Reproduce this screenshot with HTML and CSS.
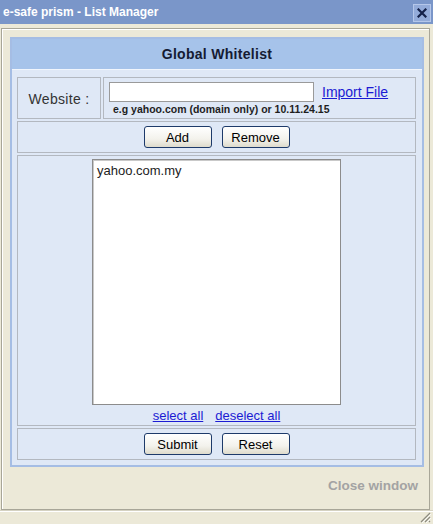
FILE: index.html
```html
<!DOCTYPE html>
<html>
<head>
<meta charset="utf-8">
<title>e-safe prism - List Manager</title>
<link rel="stylesheet" href="styles.css">
</head>
<body>
<div class="titlebar">
  <span class="title">e-safe prism - List Manager</span>
  <span class="close-btn">
    <svg width="10" height="10" viewBox="0 0 10 10"><path d="M1.5 1.5 L8.5 8.5 M8.5 1.5 L1.5 8.5" stroke="#15224a" stroke-width="2.2" stroke-linecap="square"/></svg>
  </span>
</div>
<div class="frame">
  <div class="panel">
    <div class="panel-head">Global Whitelist</div>
    <div class="panel-body">
      <div class="row row-split">
        <div class="cell label-cell">Website :</div>
        <div class="cell input-cell">
          <div class="input-line">
            <input class="site-input" type="text">
            <a class="link import-link" href="#">Import File</a>
          </div>
          <div class="hint">e.g yahoo.com (domain only) or 10.11.24.15</div>
        </div>
      </div>
      <div class="row cell btn-row">
        <button class="btn">Add</button>
        <button class="btn">Remove</button>
      </div>
      <div class="row cell list-row">
        <div class="listbox"><div class="list-item">yahoo.com.my</div></div>
        <div class="list-links">
          <a class="link" href="#">select all</a>
          <a class="link" href="#">deselect all</a>
        </div>
      </div>
      <div class="row cell btn-row">
        <button class="btn">Submit</button>
        <button class="btn">Reset</button>
      </div>
    </div>
  </div>
  <div class="close-window">Close window</div>
</div>
<div class="statusbar">
  <svg class="grip" width="12" height="12" viewBox="0 0 12 12">
    <path d="M11 2 L2 11 M11 6 L6 11 M11 10 L10 11" stroke="#8d8b80" stroke-width="1.2"/>
    <path d="M12 3 L3 12 M12 7 L7 12" stroke="#ffffff" stroke-width="0.8"/>
  </svg>
</div>
</body>
</html>
```

FILE: styles.css
```css
* { box-sizing: border-box; }
html, body {
  margin: 0;
  padding: 0;
  background: #ece9d8;
  font-family: "Liberation Sans", Arial, sans-serif;
  width: 433px;
  height: 524px;
  overflow: hidden;
}
.titlebar {
  height: 24px;
  background: #7a96c9;
  display: flex;
  align-items: center;
  justify-content: space-between;
  padding: 0 2px 0 3px;
}
.title {
  color: #ffffff;
  font-weight: bold;
  font-size: 12px;
}
.close-btn {
  width: 18px;
  height: 18px;
  background: #93abd9;
  border: 1px solid #b5c7ea;
  display: flex;
  align-items: center;
  justify-content: center;
  margin-top: 2px;
}
.frame {
  margin: 4px 3px 0 1px;
  height: 482px;
  border: 1px solid #a8a698;
  box-shadow: inset 1px 1px 0 #ffffff;
  padding: 8px 5px 0 8px;
}
.panel {
  width: 414px;
  border: 2px solid #a5bde4;
  background: #dfe8f6;
}
.panel-head {
  height: 31px;
  background: #a6c3ea;
  border-bottom: 1px solid #f1f5fc;
  display: flex;
  align-items: center;
  justify-content: center;
  font-weight: bold;
  font-size: 14px;
  letter-spacing: 0.3px;
  color: #151b33;
  padding-bottom: 1px;
}
.panel-body {
  padding: 7px 6px 5px 5px;
  display: flex;
  flex-direction: column;
  gap: 2px;
}
.cell {
  border: 1px solid #b3b8c0;
}
.row-split {
  display: flex;
  gap: 2px;
  height: 42px;
}
.label-cell {
  width: 84px;
  display: flex;
  align-items: center;
  justify-content: center;
  font-size: 14px;
  letter-spacing: 0.3px;
  color: #333333;
  padding-top: 1px;
}
.input-cell {
  flex: 1;
  padding: 4px 0 0 5px;
}
.input-line {
  display: flex;
  align-items: center;
}
.site-input {
  width: 205px;
  height: 20px;
  border: 1px solid #9a9a9a;
  background: #ffffff;
  margin: 0;
  padding: 0;
}
.import-link {
  margin-left: 8px;
  font-size: 14px;
}
.hint {
  font-size: 10.5px;
  font-weight: bold;
  color: #1e1e1e;
  margin: 1px 0 0 4px;
}
.link {
  color: #1b1bd3;
  text-decoration: underline;
}
.btn-row {
  height: 32px;
  display: flex;
  align-items: center;
  justify-content: center;
  gap: 10px;
}
.btn {
  width: 68px;
  height: 22px;
  border: 1px solid #1d3a6a;
  border-radius: 3px;
  background: linear-gradient(#ffffff, #f3f2ec 60%, #dedbcc);
  font-family: "Liberation Sans", Arial, sans-serif;
  font-size: 13px;
  color: #000000;
  padding: 0;
}
.list-row {
  height: 271px;
  display: flex;
  flex-direction: column;
  align-items: center;
  padding-top: 3px;
}
.listbox {
  width: 249px;
  height: 246px;
  background: #ffffff;
  border: 1px solid #8c8c8c;
  box-shadow: inset 1px 1px 0 #c9c9c9;
  padding: 3px 0 0 4px;
}
.list-item {
  font-size: 13px;
  color: #222222;
}
.list-links {
  display: flex;
  gap: 12px;
  font-size: 13px;
  margin-top: 3px;
}
.close-window {
  text-align: right;
  font-weight: bold;
  font-size: 13.5px;
  color: #a3a3a3;
  margin-top: 11px;
  padding-right: 6px;
}
.statusbar {
  height: 14px;
  border-top: 1px solid #d5d2c2;
  box-shadow: inset 0 1px 0 #ffffff;
  display: flex;
  justify-content: flex-end;
  align-items: flex-end;
  padding: 0 2px 1px 0;
}
.grip { display: block; }
```
